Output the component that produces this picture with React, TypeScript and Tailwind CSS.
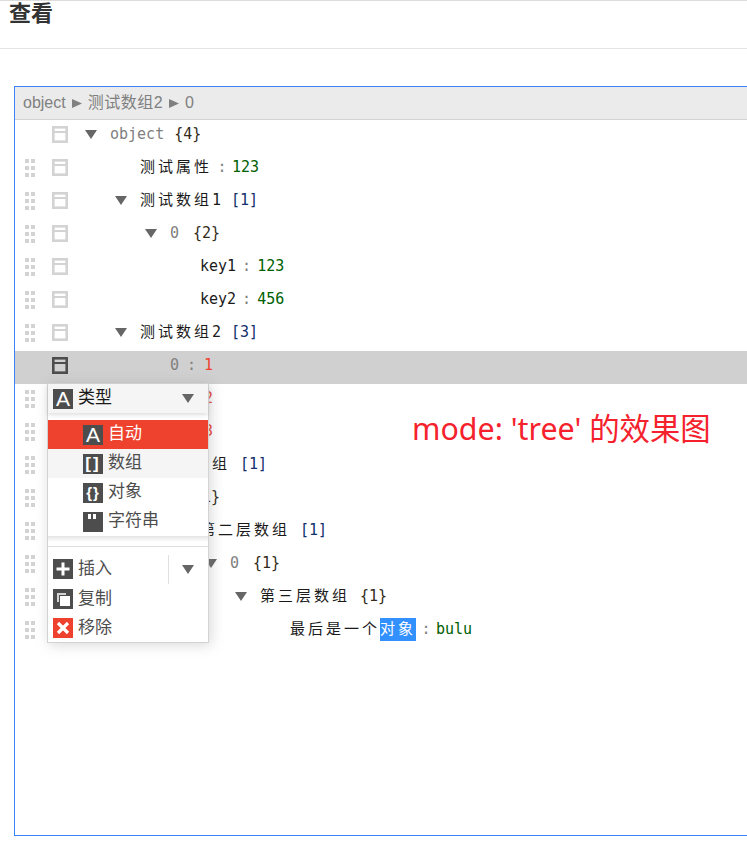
import React from "react";

const mono = "font-['DejaVu_Sans_Mono','Noto_Sans_CJK_SC',monospace] text-[15px]";
const sans = "font-['Liberation_Sans','Noto_Sans_CJK_SC',sans-serif]";

type Row = {
  depth: number;
  open?: boolean;
  name: string;
  isIndex?: boolean;
  count?: string;
  value?: string;
  number?: boolean;
  active?: boolean;
  noDrag?: boolean;
};

const rows: Row[] = [
  { depth: 0, open: true, name: "object", count: "{4}", noDrag: true },
  { depth: 1, name: "测试属性", value: "123" },
  { depth: 1, open: true, name: "测试数组1", count: "[1]" },
  { depth: 2, open: true, name: "0", isIndex: true, count: "{2}" },
  { depth: 3, name: "key1", value: "123" },
  { depth: 3, name: "key2", value: "456" },
  { depth: 1, open: true, name: "测试数组2", count: "[3]" },
  { depth: 2, name: "0", isIndex: true, value: "1", number: true, active: true, noDrag: true },
  { depth: 2, name: "1", isIndex: true, value: "2", number: true },
  { depth: 2, name: "2", isIndex: true, value: "3", number: true },
  { depth: 1, open: true, name: "第一层数组", count: "[1]" },
  { depth: 2, open: true, name: "0", isIndex: true, count: "{1}" },
  { depth: 3, open: true, name: "第二层数组", count: "[1]" },
  { depth: 4, open: true, name: "0", isIndex: true, count: "{1}" },
  { depth: 5, open: true, name: "第三层数组", count: "{1}" },
];

function DragDots() {
  return (
    <svg width={10} height={18} viewBox="0 0 10 18" fill="#d3d3d3">
      {[0, 7, 14].map((y) => (
        <g key={y}>
          <rect x={0} y={y} width={4} height={4} />
          <rect x={6} y={y} width={4} height={4} />
        </g>
      ))}
    </svg>
  );
}

function ContextIcon({ dark }: { dark?: boolean }) {
  return (
    <svg width={16} height={17} viewBox="0 0 16 17" fill="none" stroke={dark ? "#4d4d4d" : "#d3d3d3"} strokeWidth={2.6}>
      <rect x={1.3} y={1.3} width={13.4} height={14.4} />
      <path d="M2 6h12" strokeWidth={2} />
    </svg>
  );
}

function Triangle() {
  return (
    <svg width={12} height={9} viewBox="0 0 12 9">
      <path d="M0 0h12L6 9z" fill="#666" />
    </svg>
  );
}

function Crumb() {
  return (
    <svg width={10} height={9} viewBox="0 0 10 9">
      <path d="M0 0l10 4.5L0 9z" fill="#808080" />
    </svg>
  );
}

function Colon({ width }: { width: string }) {
  return <span className={`text-center text-[#808080] ${width}`}>:</span>;
}

// CJK takes two mono cells in the reference, digits and latin only one
function Name({ row }: { row: Row }) {
  if (row.isIndex || row.name === "object") return <span className="text-[#808080]">{row.name}</span>;
  const parts = row.name.match(/[\u4e00-\u9fff]+|[^\u4e00-\u9fff]+/g) ?? [];
  return (
    <span className="text-[#1a1a1a]">
      {parts.map((p, i) => (
        <span key={i} className={/[\u4e00-\u9fff]/.test(p) ? "tracking-[3px]" : ""}>
          {p}
        </span>
      ))}
    </span>
  );
}

function TreeRow({ row }: { row: Row }) {
  const cjkKey = /[\u4e00-\u9fff]/.test(row.name);
  return (
    <div className={`flex h-[33px] pt-[6px] ${row.active ? "bg-[#d0d0d0]" : ""}`}>
      <div className="flex h-[17px] items-center">
        <div className="flex w-[37px] pl-[10px]">{!row.noDrag && <DragDots />}</div>
        <ContextIcon dark={row.active} />
        <div className={`flex items-center whitespace-pre ${mono}`} style={{ paddingLeft: 17 + row.depth * 30 }}>
          <div className="w-[25px]">{row.open && <Triangle />}</div>
          <Name row={row} />
          {row.count && (
            <span
              className={`${row.isIndex ? "ml-[14px]" : "ml-[10px]"} ${
                row.count[0] === "[" ? "text-[#12306b]" : "text-[#332b1a]"
              }`}
            >
              {row.count}
            </span>
          )}
          {row.value && <Colon width={row.isIndex ? "w-[25px]" : cjkKey ? "w-[20px]" : "w-[21px]"} />}
          {row.value && <span className={row.number ? "text-[#ee422e]" : "text-[#006000]"}>{row.value}</span>}
        </div>
      </div>
    </div>
  );
}

function GlyphIcon({ children, red }: { children: React.ReactNode; red?: boolean }) {
  return (
    <div
      className={`flex h-5 w-5 shrink-0 items-center justify-center font-['Liberation_Sans',sans-serif] text-white ${
        red ? "bg-[#ee422e]" : "bg-[#4d4d4d]"
      }`}
    >
      {children}
    </div>
  );
}

const typeItems = [
  { label: "自动", glyph: <span className="text-[21px] leading-none">A</span>, selected: true },
  { label: "数组", glyph: <span className="text-[17px] font-bold leading-none tracking-[2px]">[]</span>, hover: true },
  { label: "对象", glyph: <span className="text-[15px] font-bold leading-none tracking-[1px]">{"{}"}</span> },
  {
    label: "字符串",
    glyph: (
      <svg width={20} height={20} viewBox="0 0 20 20" fill="#fff">
        <rect x={5} y={2} width={3} height={5} />
        <rect x={10} y={2} width={3} height={5} />
      </svg>
    ),
  },
];

function ContextMenu() {
  return (
    <div className={`absolute left-[47px] top-[382px] w-[162px] border border-[#d3d3d3] bg-white text-[17px] leading-[20px] shadow-[2px_2px_12px_rgba(128,128,128,0.3)] ${sans}`}>
      <div className="relative z-10 flex h-[29px] items-center bg-[#f5f5f5] pl-[5px] pr-[14px] text-[#1a1a1a] shadow-[0_2px_4px_rgba(128,128,128,0.25)]">
        <GlyphIcon>
          <span className="text-[21px] leading-none">A</span>
        </GlyphIcon>
        <span className="ml-[5px] flex-1 pb-[2px]">类型</span>
        <Triangle />
      </div>
      <div className="mt-[7px]">
        {typeItems.map((item) => (
          <div
            key={item.label}
            className={`flex h-[29px] items-center pl-[35px] ${
              item.selected ? "bg-[#ee422e] text-white" : item.hover ? "bg-[#f5f5f5] text-[#4d4d4d]" : "text-[#4d4d4d]"
            }`}
          >
            <GlyphIcon>{item.glyph}</GlyphIcon>
            <span className="ml-[5px] pb-[2px]">{item.label}</span>
          </div>
        ))}
      </div>
      <div className="h-[6px] bg-gradient-to-b from-[#e4e4e4] to-white" />
      <div className="h-[5px] border-b border-[#e0e0e0]" />
      <div className="mt-[7px] flex h-[30px] items-center pl-[5px] text-[#4d4d4d]">
        <GlyphIcon>
          <svg width={20} height={20} viewBox="0 0 20 20" fill="#fff">
            <path d="M8.5 3.5h3v5h5v3h-5v5h-3v-5h-5v-3h5z" />
          </svg>
        </GlyphIcon>
        <span className="ml-[5px] flex-1">插入</span>
        <div className="flex h-[29px] w-[40px] items-center justify-center border-l border-[#e0e0e0] pr-[2px]">
          <Triangle />
        </div>
      </div>
      <div className="flex h-[29px] items-center pl-[5px] text-[#4d4d4d]">
        <GlyphIcon>
          <svg width={20} height={20} viewBox="0 0 20 20">
            <path d="M4 4h9v2H6v7H4z" fill="#d3d3d3" />
            <rect x={7} y={7} width={10} height={10} fill="#fff" />
          </svg>
        </GlyphIcon>
        <span className="ml-[5px]">复制</span>
      </div>
      <div className="flex h-[29px] items-center pl-[5px] text-[#4d4d4d]">
        <GlyphIcon red>
          <svg width={20} height={20} viewBox="0 0 20 20" stroke="#fff" strokeWidth={3.2}>
            <path d="M5 5l10 10M15 5L5 15" />
          </svg>
        </GlyphIcon>
        <span className="ml-[5px]">移除</span>
      </div>
    </div>
  );
}

export default function App() {
  return (
    <div className="relative h-[854px] w-[747px] overflow-hidden border-t border-[#dddddd] bg-white">
      <div className="h-[48px] border-b border-[#e5e5e5] pl-[9px]">
        <h1 className={`text-[22px] font-bold leading-[26px] text-[#333] ${sans}`}>查看</h1>
      </div>
      <div className="ml-[14px] mt-[37px] h-[750px] w-[800px] border border-[#3883fa]">
        <div className={`flex h-[33px] items-center gap-[6px] border-b border-[#d3d3d3] bg-[#ebebeb] pl-[8px] text-[16px] text-[#808080] ${sans}`}>
          <span>object</span>
          <Crumb />
          <span className="tracking-[0.5px]">测试数组2</span>
          <Crumb />
          <span>0</span>
        </div>
        {rows.map((row, i) => (
          <TreeRow key={i} row={row} />
        ))}
        <div className="flex h-[33px] pt-[6px]">
          <div className="flex h-[17px] items-center">
            <div className="flex w-[37px] pl-[10px]">
              <DragDots />
            </div>
            <div className={`flex items-center whitespace-pre pl-[238px] ${mono}`}>
              <span className="text-[#1a1a1a] tracking-[3px]">最后是一个</span>
              <span className="bg-[#3390ff] text-white tracking-[3px]">对象</span>
              <Colon width="w-[20px]" />
              <span className="text-[#006000]">bulu</span>
            </div>
          </div>
        </div>
      </div>
      <ContextMenu />
      <div className="absolute left-[412px] top-[409px] font-['Noto_Sans','Noto_Sans_CJK_SC',sans-serif] text-[30.4px] leading-[38px] text-[#f5222d]">
        mode: 'tree' 的效果图
      </div>
    </div>
  );
}
